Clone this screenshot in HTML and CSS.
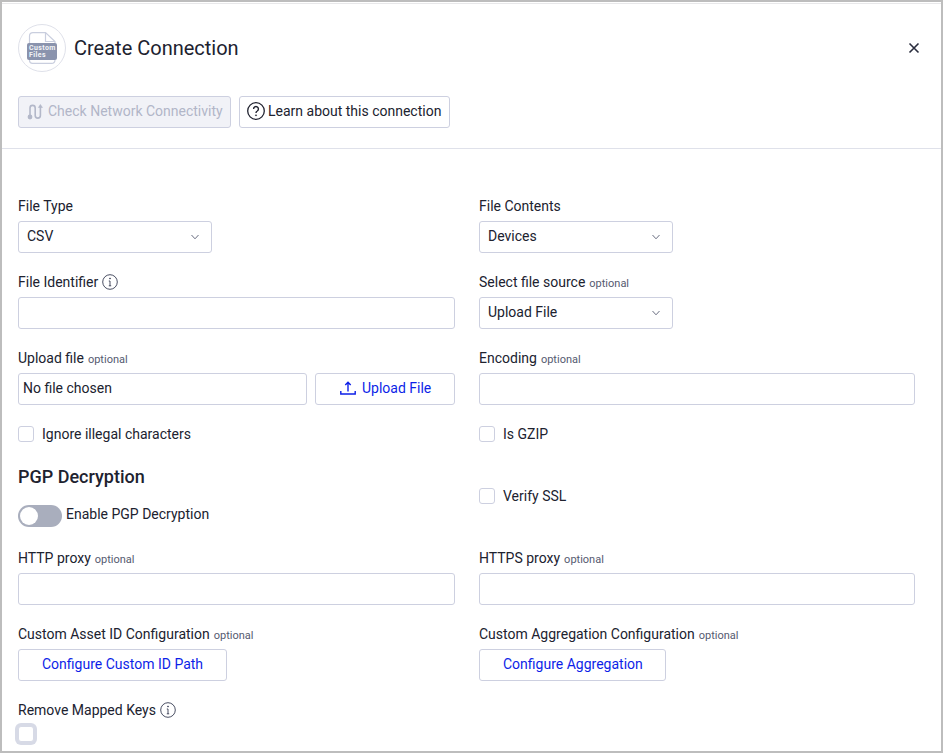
FILE: index.html
```html
<!DOCTYPE html>
<html lang="en">
<head>
<meta charset="utf-8">
<title>Create Connection</title>
<link rel="stylesheet" href="styles.css">
</head>
<body>
<div class="dialog">
  <header class="head">
    <div class="title-row">
      <div class="logo">
        <svg width="30" height="32" viewBox="0 0 30 32">
          <path d="M2.500 11V4A3.500 3.500 0 0 1 6 .6H18.500L28 9.500V11M2.500 28V28.500A3 3 0 0 0 5.500 31.400H24.500A3.500 3.500 0 0 0 28 28V28" fill="none" stroke="#c9cede" stroke-width="1.200"/>
          <path d="M18.500 .6V9.500H28" fill="none" stroke="#c9cede" stroke-width="1.200"/>
          <rect x="0" y="11" width="30" height="17" rx="2" fill="#8a93ad"/>
        </svg>
        <span class="logo-text">Custom<br>Files</span>
      </div>
      <h1 class="title">Create Connection</h1>
      <svg class="close" width="12" height="12" viewBox="0 0 12 12"><path d="M1.500 1.500L10.500 10.500M10.500 1.500L1.500 10.500" stroke="#2a2d3e" stroke-width="1.600"/></svg>
    </div>
    <div class="actions">
      <button class="btn btn-disabled" type="button">
        <svg width="16" height="18" viewBox="0 0 16 18" fill="none" stroke="#b3b8c9" stroke-width="1.600"><path d="M3 14V6A2.600 2.600 0 0 1 8.200 6V13.500A2.600 2.600 0 0 0 13.400 13.500V4"/><circle cx="3" cy="15" r="1.600" fill="#b3b8c9"/><path d="M11.400 5.500L13.400 2.500L15.400 5.500Z" fill="#b3b8c9" stroke-width=".6"/></svg>
        Check Network Connectivity
      </button>
      <button class="btn btn-learn" type="button">
        <svg width="18" height="18" viewBox="0 0 18 18" fill="none" stroke="#20222f" stroke-width="1.300"><circle cx="9" cy="9" r="8.300"/><path d="M6.600 7A2.400 2.400 0 1 1 10.300 9C9.400 9.500 9 10 9 11" stroke-width="1.400"/><circle cx="9" cy="13.300" r=".6" fill="#20222f" stroke-width=".6"/></svg>
        Learn about this connection
      </button>
    </div>
  </header>
  <form class="form">
    <div class="field">
      <label class="label">File Type</label>
      <div class="select narrow"><span>CSV</span><svg class="chev" width="8" height="6" viewBox="0 0 8 6"><path d="M.5 1L4 4.800L7.500 1" fill="none" stroke="#6a6f82"/></svg></div>
    </div>
    <div class="field">
      <label class="label">File Contents</label>
      <div class="select narrow"><span>Devices</span><svg class="chev" width="8" height="6" viewBox="0 0 8 6"><path d="M.5 1L4 4.800L7.500 1" fill="none" stroke="#6a6f82"/></svg></div>
    </div>
    <div class="field">
      <label class="label">File Identifier
        <svg class="info" width="16" height="16" viewBox="0 0 16 16" fill="none" stroke="#4a4f63"><circle cx="8" cy="8" r="7.300"/><path d="M8 7V12M6.800 11.800H9.200M6.800 7H8"/><circle cx="8" cy="4.500" r=".5" fill="#4a4f63"/></svg>
      </label>
      <div class="input"></div>
    </div>
    <div class="field">
      <label class="label">Select file source <small>optional</small></label>
      <div class="select narrow"><span>Upload File</span><svg class="chev" width="8" height="6" viewBox="0 0 8 6"><path d="M.5 1L4 4.800L7.500 1" fill="none" stroke="#6a6f82"/></svg></div>
    </div>
    <div class="field">
      <label class="label">Upload file <small>optional</small></label>
      <div class="upload">
        <div class="input file-name"><span>No file chosen</span></div>
        <button class="btn btn-link btn-upload" type="button">
          <svg width="16" height="14" viewBox="0 0 16 14" fill="none" stroke="#0d1fe8" stroke-width="1.400"><path d="M8 10.500V1.500M5.300 4L8 1.200L10.700 4M.8 10V13H15.200V10"/></svg>
          Upload File
        </button>
      </div>
    </div>
    <div class="field">
      <label class="label">Encoding <small>optional</small></label>
      <div class="input"></div>
    </div>
    <div class="check-row"><span class="check"></span>Ignore illegal characters</div>
    <div class="check-row"><span class="check"></span>Is GZIP</div>
    <div class="pgp">
      <h2 class="section">PGP Decryption</h2>
      <div class="toggle-row"><span class="toggle"><span class="knob"></span></span><span class="toggle-text">Enable PGP Decryption</span></div>
    </div>
    <div class="check-row verify"><span class="check"></span>Verify SSL</div>
    <div class="field">
      <label class="label">HTTP proxy <small>optional</small></label>
      <div class="input"></div>
    </div>
    <div class="field">
      <label class="label">HTTPS proxy <small>optional</small></label>
      <div class="input"></div>
    </div>
    <div class="field">
      <label class="label">Custom Asset ID Configuration <small>optional</small></label>
      <div><button class="btn btn-link btn-config" type="button">Configure Custom ID Path</button></div>
    </div>
    <div class="field">
      <label class="label">Custom Aggregation Configuration <small>optional</small></label>
      <div><button class="btn btn-link btn-config" type="button">Configure Aggregation</button></div>
    </div>
    <div class="field last">
      <label class="label">Remove Mapped Keys
        <svg class="info" width="16" height="16" viewBox="0 0 16 16" fill="none" stroke="#4a4f63"><circle cx="8" cy="8" r="7.300"/><path d="M8 7V12M6.800 11.800H9.200M6.800 7H8"/><circle cx="8" cy="4.500" r=".5" fill="#4a4f63"/></svg>
      </label>
      <span class="check focus"></span>
    </div>
  </form>
</div>
</body>
</html>
```
FILE: styles.css
```css
* { box-sizing: border-box; }
html, body { margin: 0; height: 100%; overflow: hidden; }
body { background: #fff; font-family: Roboto, "Liberation Sans", sans-serif; font-size: 14px; color: #20222f; }
.dialog { width: 943px; height: 753px; border: 2px solid #bdbdbd; overflow: hidden; background: #fff; }
.head { height: 146px; margin-top: 1px; border-top: 1px solid #e8e8ea; border-bottom: 1px solid #dfe1ea; padding: 20px 16px 0; }
.title-row { display: flex; align-items: center; gap: 8px; height: 48px; }
.logo { position: relative; width: 48px; height: 48px; border: 1px solid #dfe1ea; border-radius: 50%; display: flex; align-items: center; justify-content: center; flex: none; }
.logo-text { position: absolute; left: 10px; top: 20px; font-size: 7px; line-height: 7px; letter-spacing: .4px; font-weight: 700; color: #f2f3f7; }
.title { margin: 0; font-size: 20px; font-weight: 400; color: #20222f; flex: 1; }
.close { flex: none; margin-right: 5px; }
.actions { display: flex; gap: 8px; margin-top: 24px; }
.btn { height: 32px; border: 1px solid #cdd0e0; border-radius: 3px; background: #fff; font: inherit; display: inline-flex; align-items: center; justify-content: center; padding: 0 8px 2px; gap: 3px; color: #20222f; white-space: nowrap; }
.btn svg { flex: none; }
.btn-disabled { width: 213px; justify-content: flex-start; padding: 0 0 2px 8px; gap: 5px; background: #f1f2f7; color: #b1b6c8; }
.btn-learn { width: 211px; justify-content: flex-start; padding: 0 0 2px 7px; gap: 3px; }
.btn-link { color: #0d1fe8; }
.btn-upload { flex: none; width: 140px; justify-content: flex-start; padding: 0 0 2px 24px; gap: 6px; }
.btn-config { padding-left: 23px; padding-right: 22.500px; }
.form { display: grid; grid-template-columns: 437px 436px; column-gap: 24px; padding: 48px 16px 0; align-items: start; }
.field { height: 76px; }
.label { display: flex; align-items: center; gap: 4px; height: 18px; margin-bottom: 6px; line-height: 18px; white-space: nowrap; }
small { font-size: 11px; color: #555a70; margin-top: 4px; }
.info { flex: none; }
.input, .select { height: 32px; border: 1px solid #cdd0e0; border-radius: 3px; background: #fff; }
.select { display: flex; align-items: center; justify-content: space-between; padding: 0 12px 0 8px; }
.select span, .file-name span { margin-bottom: 2px; }
.narrow { width: 194px; }
.upload { display: flex; gap: 8px; }
.file-name { flex: 1; display: flex; align-items: center; padding-left: 4px; }
.check-row { display: flex; align-items: center; gap: 8px; height: 16px; margin-top: 1px; }
.check { display: block; width: 16px; height: 16px; border: 1px solid #cdd0e0; border-radius: 3px; background: #fff; flex: none; }
.pgp { margin-top: 24px; height: 83px; }
.section { margin: 0; font-size: 18px; font-weight: 500; line-height: 22px; }
.toggle-row { display: flex; align-items: center; gap: 4px; margin-top: 17px; height: 22px; }
.toggle { display: block; width: 44px; height: 22px; border-radius: 11px; background: #a9aebd; padding: 2px; }
.knob { display: block; width: 18px; height: 18px; border-radius: 50%; background: #fff; }
.toggle-text { margin-bottom: 4px; }
.verify { margin-top: 46px; }
.last .label { margin-bottom: 7px; }
.focus { border-color: #d7dae6; box-shadow: 0 0 0 3px #d7dae6; }
```
